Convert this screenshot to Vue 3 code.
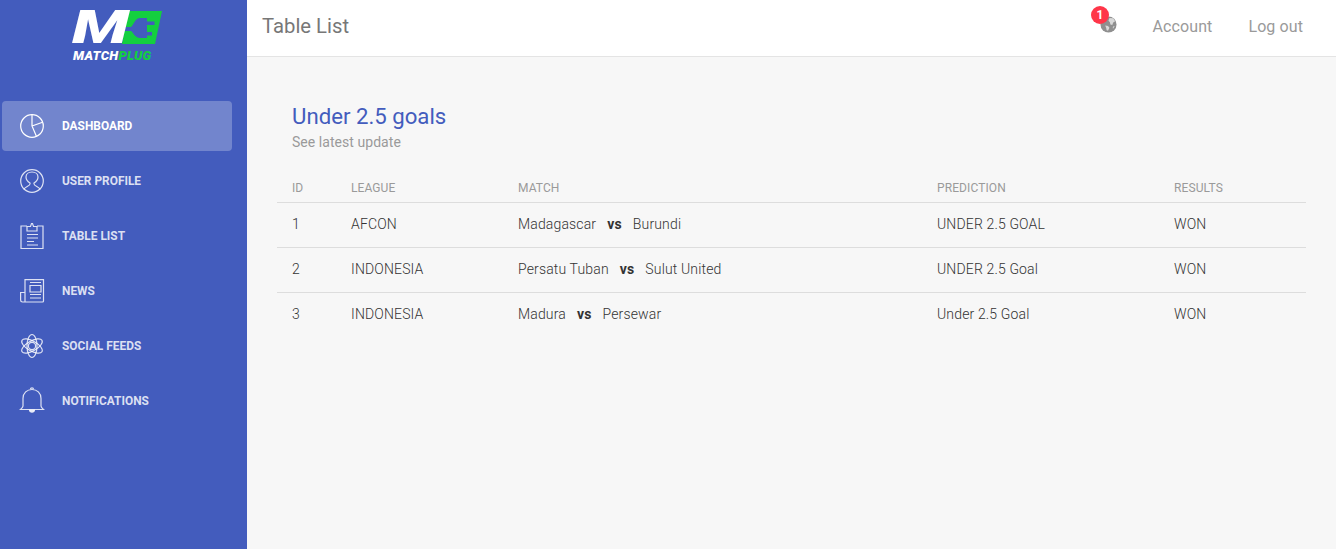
<script setup>
const nav = [
  { label: 'Dashboard', icon: 'pie', active: true },
  { label: 'User Profile', icon: 'user' },
  { label: 'Table List', icon: 'clip' },
  { label: 'News', icon: 'news' },
  { label: 'Social Feeds', icon: 'atom' },
  { label: 'Notifications', icon: 'bell' }
]
const rows = [
  { id: 1, league: 'AFCON', home: 'Madagascar', away: 'Burundi', pred: 'UNDER 2.5 GOAL', res: 'WON' },
  { id: 2, league: 'INDONESIA', home: 'Persatu Tuban', away: 'Sulut United', pred: 'UNDER 2.5 Goal', res: 'WON' },
  { id: 3, league: 'INDONESIA', home: 'Madura', away: 'Persewar', pred: 'Under 2.5 Goal', res: 'WON' }
]
</script>

<template>
  <div class="page">
    <aside class="sidebar">
      <div class="logo">
        <div class="mark">
          <span class="m">M</span>
          <svg class="plug" viewBox="0 0 40 33" width="40" height="33">
            <path d="M6 0H40L33 33H0Z" fill="#14cf3f" />
            <path d="M25 7V27H18C13 27 11 21 9 20H3V16H9C11 15 13 7 18 7Z" fill="#435cbd" />
            <path d="M24 10.500H32.500V14H24ZM24 21H30V24.500H24Z" fill="#435cbd" />
          </svg>
        </div>
        <div class="brand"><span class="w">MATCH</span><span class="g">PLUG</span></div>
      </div>
      <nav class="nav">
        <a v-for="item in nav" :key="item.label" class="item" :class="{ active: item.active }">
          <svg class="ico" viewBox="0 0 24 24" width="24" height="24" fill="none" stroke="currentColor" stroke-width="1.200">
            <template v-if="item.icon === 'pie'">
              <circle cx="12" cy="12" r="11.300" />
              <path d="M12 .7V12l4.500 10.400M12 12l10.600-3.800" />
            </template>
            <template v-else-if="item.icon === 'user'">
              <circle cx="12" cy="12" r="11.300" />
              <path d="M4 20.500c.5-3 5.500-3 6-5.500v-1c-2.500-1.500-4-4-4-6 0-3 2.500-5 6-5s6 2 6 5c0 2-1.500 4.500-4 6v1c.5 2.500 5.500 2.500 6 5.500" />
            </template>
            <template v-else-if="item.icon === 'clip'">
              <path d="M7 2H1V24.500H23V2H17" />
              <path d="M7 7V2.500H10.500L11.500-.5H12.500L13.500 2.500H17V7Z" />
              <path d="M7 10.500H18M7 14H18M7 17.500H14M7 21H18" />
            </template>
            <template v-else-if="item.icon === 'news'">
              <path d="M5 23V.7H23.500V22a1 1 0 0 1-1 1H2.500A2 2 0 0 1 .6 21V13.500H5" />
              <path d="M10 6.500H21V13H10ZM10 15.500H21M10 19H21M10 3.500H21" />
            </template>
            <template v-else-if="item.icon === 'atom'">
              <circle cx="12" cy="12" r="3.600" />
              <ellipse cx="12" cy="12" rx="5" ry="11.500" />
              <ellipse cx="12" cy="12" rx="5" ry="11.500" transform="rotate(60 12 12)" />
              <ellipse cx="12" cy="12" rx="5" ry="11.500" transform="rotate(120 12 12)" />
            </template>
            <template v-else>
              <path d="M3 17V9.500C3 4 7 .5 12 .5s9 3.500 9 9V17c0 1.500 1.500 2.500 2.500 3.500H.5C1.500 19.500 3 18.500 3 17Z" />
              <path d="M10.500 .3a1.500 1.500 0 0 1 3 0" />
              <path d="M9.500 21c.3 3 4.700 3 5 0z" fill="currentColor" />
            </template>
          </svg>
          <span class="label">{{ item.label }}</span>
        </a>
      </nav>
    </aside>

    <div class="main">
      <header class="topbar">
        <h1 class="page-title">Table List</h1>
        <div class="actions">
          <span class="globe">
            <svg viewBox="0 0 18 18" width="17" height="17">
              <circle cx="9" cy="9" r="8.500" fill="#8f8f8f" />
              <path d="M10 2l4 .5 2 3-2 1.500-1 2.500-2-.5-.5-2.500-1.500-1.500zM5.500 10l3 .5 1.500 2-1.500 3-1.500-.5-.5-2.500zM14.500 10.500l1 .2-1.500 2.500-.7-.5z" fill="#d9d9d9" />
            </svg>
            <b class="badge">1</b>
          </span>
          <a class="link">Account</a>
          <a class="link">Log out</a>
        </div>
      </header>

      <main class="content">
        <div class="card-head">
          <h2 class="title">Under 2.5 goals</h2>
          <p class="sub">See latest update</p>
        </div>
        <table class="tbl">
          <colgroup>
            <col class="c1" /><col class="c2" /><col class="c3" /><col class="c4" /><col class="c5" />
          </colgroup>
          <thead>
            <tr><th>ID</th><th>LEAGUE</th><th>MATCH</th><th>PREDICTION</th><th>RESULTS</th></tr>
          </thead>
          <tbody>
            <tr v-for="r in rows" :key="r.id">
              <td>{{ r.id }}</td>
              <td>{{ r.league }}</td>
              <td class="match"><span>{{ r.home }}</span><strong>vs</strong><span>{{ r.away }}</span></td>
              <td>{{ r.pred }}</td>
              <td>{{ r.res }}</td>
            </tr>
          </tbody>
        </table>
      </main>
    </div>
  </div>
</template>

<style scoped>
.page {
  display: flex;
  width: 1336px;
  height: 549px;
  overflow: hidden;
  font-family: Roboto, "Liberation Sans", sans-serif;
  background: #f7f7f7;
}
.sidebar {
  width: 247px;
  flex: none;
  background: #435cbd;
  color: #fff;
}
.logo {
  height: 101px;
  box-sizing: border-box;
  padding-top: 11px;
  display: flex;
  flex-direction: column;
  align-items: flex-start;
  padding-left: 72px;
}
.mark {
  display: flex;
  height: 33px;
  align-items: center;
}
.m {
  display: block;
  width: 50px;
  font: italic 900 46px/33px Roboto, sans-serif;
  color: #fff;
  transform: scaleX(1.45);
  transform-origin: left center;
}
.plug { display: block; flex: none; }
.brand {
  font: italic 900 13px/14px Roboto, sans-serif;
  letter-spacing: 0.3px;
  margin-top: 5px;
  margin-left: 1px;
}
.brand .w { color: #fff; }
.brand .g { color: #14cf3f; }
.nav {
  display: flex;
  flex-direction: column;
  gap: 5px;
  padding: 0 15px 0 2px;
}
.item {
  display: flex;
  align-items: center;
  height: 50px;
  padding-left: 18px;
  border-radius: 4px;
  color: rgba(255, 255, 255, 0.82);
}
.item.active {
  background: rgba(255, 255, 255, 0.25);
  color: #fff;
}
.ico { flex: none; overflow: visible; }
.label {
  margin-left: 18px;
  font-size: 11.900px;
  font-weight: 700;
  text-transform: uppercase;
}
.main {
  flex: 1;
  min-width: 0;
  display: flex;
  flex-direction: column;
}
.topbar {
  height: 57px;
  box-sizing: border-box;
  flex: none;
  display: flex;
  align-items: center;
  justify-content: space-between;
  padding: 0 33px 4px 15px;
  background: #fff;
  border-bottom: 1px solid #e4e4e4;
}
.page-title {
  margin: 0;
  font-size: 20.300px;
  font-weight: 400;
  color: #777;
}
.actions {
  display: flex;
  align-items: center;
  gap: 36px;
}
.globe {
  position: relative;
  display: block;
  width: 17px;
  height: 17px;
  margin-top: -4px;
}
.globe svg { display: block; }
.badge {
  position: absolute;
  left: -8.500px;
  top: -9.500px;
  width: 18px;
  height: 18px;
  border-radius: 50%;
  background: #ff3649;
  color: #fff;
  font-size: 12px;
  line-height: 18px;
  text-align: center;
  font-weight: 700;
}
.link {
  font-size: 16px;
  font-weight: 400;
  letter-spacing: 0.1px;
  color: #9a9a9a;
}
.content {
  padding: 46px 30px 0;
}
.card-head {
  padding-left: 15px;
  height: 75px;
}
.title {
  margin: 0;
  font-size: 22.200px;
  line-height: 26px;
  font-weight: 400;
  color: #435cbd;
}
.sub {
  margin: 5px 0 0;
  font-size: 14px;
  line-height: 16px;
  font-weight: 400;
  letter-spacing: 0.05px;
  color: #9a9a9a;
}
.tbl {
  width: 1029px;
  border-collapse: collapse;
  table-layout: fixed;
}
.c1 { width: 59px; }
.c2 { width: 167px; }
.c3 { width: 419px; }
.c4 { width: 237px; }
.c5 { width: 147px; }
th {
  height: 20px;
  padding: 0 0 4px 15px;
  text-align: left;
  font-size: 12px;
  font-weight: 400;
  letter-spacing: 0.1px;
  color: #9a9a9a;
  border-bottom: 1px solid #ddd;
}
td {
  height: 42px;
  padding: 0 0 2px 15px;
  font-size: 14px;
  font-weight: 300;
  letter-spacing: 0.15px;
  color: #333;
  border-bottom: 1px solid #ddd;
}
tbody tr:last-child td { border-bottom: none; }
.match strong {
  margin: 0 11px;
  font-weight: 700;
}
</style>
